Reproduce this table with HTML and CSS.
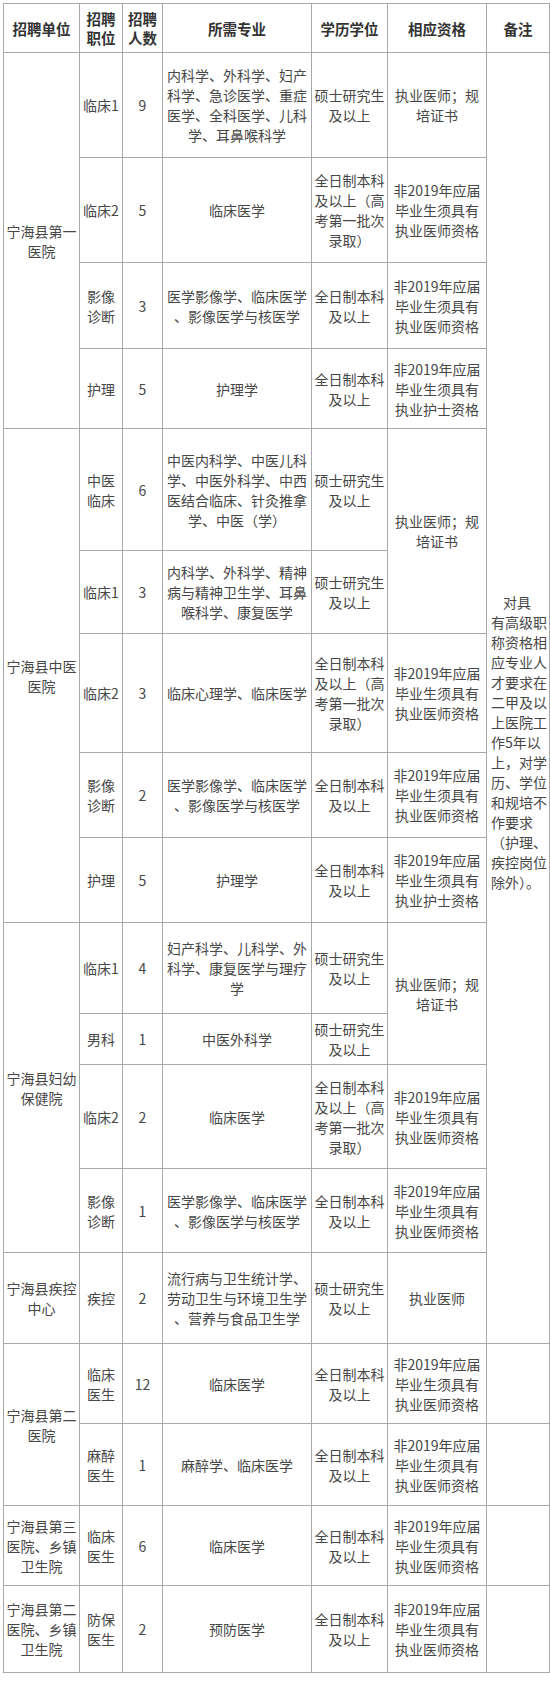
FILE: index.html
```html
<!DOCTYPE html>
<html lang="zh-CN">
<head>
<meta charset="utf-8">
<title>招聘计划表</title>
<link rel="stylesheet" href="styles.css">
</head>
<body>
<table class="plan">
  <colgroup>
    <col class="c-unit"><col class="c-post"><col class="c-num"><col class="c-major"><col class="c-edu"><col class="c-qual"><col class="c-note">
  </colgroup>
  <thead>
    <tr class="h49">
      <th>招聘单位</th><th>招聘<br>职位</th><th>招聘<br>人数</th><th>所需专业</th><th>学历学位</th><th>相应资格</th><th>备注</th>
    </tr>
  </thead>
  <tbody>
    <tr class="h105">
      <td rowspan="4">宁海县第一<br>医院</td>
      <td>临床1</td><td>9</td>
      <td>内科学、外科学、妇产<br>科学、急诊医学、重症<br>医学、全科医学、儿科<br>学、耳鼻喉科学</td>
      <td>硕士研究生<br>及以上</td>
      <td>执业医师；规<br>培证书</td>
      <td rowspan="14" class="note">对具<br>有高级职<br>称资格相<br>应专业人<br>才要求在<br>二甲及以<br>上医院工<br>作5年以<br>上，对学<br>历、学位<br>和规培不<br>作要求<br>（护理、<br>疾控岗位<br>除外）。</td>
    </tr>
    <tr class="h105">
      <td>临床2</td><td>5</td><td>临床医学</td>
      <td>全日制本科<br>及以上（高<br>考第一批次<br>录取）</td>
      <td>非2019年应届<br>毕业生须具有<br>执业医师资格</td>
    </tr>
    <tr class="h86">
      <td>影像<br>诊断</td><td>3</td>
      <td>医学影像学、临床医学<br>、影像医学与核医学</td>
      <td>全日制本科<br>及以上</td>
      <td>非2019年应届<br>毕业生须具有<br>执业医师资格</td>
    </tr>
    <tr class="h80">
      <td>护理</td><td>5</td><td>护理学</td>
      <td>全日制本科<br>及以上</td>
      <td>非2019年应届<br>毕业生须具有<br>执业护士资格</td>
    </tr>

    <tr class="h122">
      <td rowspan="5">宁海县中医<br>医院</td>
      <td>中医<br>临床</td><td>6</td>
      <td>中医内科学、中医儿科<br>学、中医外科学、中西<br>医结合临床、针灸推拿<br>学、中医（学）</td>
      <td>硕士研究生<br>及以上</td>
      <td rowspan="2">执业医师；规<br>培证书</td>
    </tr>
    <tr class="h83">
      <td>临床1</td><td>3</td>
      <td>内科学、外科学、精神<br>病与精神卫生学、耳鼻<br>喉科学、康复医学</td>
      <td>硕士研究生<br>及以上</td>
    </tr>
    <tr class="h119">
      <td>临床2</td><td>3</td><td>临床心理学、临床医学</td>
      <td>全日制本科<br>及以上（高<br>考第一批次<br>录取）</td>
      <td>非2019年应届<br>毕业生须具有<br>执业医师资格</td>
    </tr>
    <tr class="h85">
      <td>影像<br>诊断</td><td>2</td>
      <td>医学影像学、临床医学<br>、影像医学与核医学</td>
      <td>全日制本科<br>及以上</td>
      <td>非2019年应届<br>毕业生须具有<br>执业医师资格</td>
    </tr>
    <tr class="h85">
      <td>护理</td><td>5</td><td>护理学</td>
      <td>全日制本科<br>及以上</td>
      <td>非2019年应届<br>毕业生须具有<br>执业护士资格</td>
    </tr>

    <tr class="h91">
      <td rowspan="4">宁海县妇幼<br>保健院</td>
      <td>临床1</td><td>4</td>
      <td>妇产科学、儿科学、外<br>科学、康复医学与理疗<br>学</td>
      <td>硕士研究生<br>及以上</td>
      <td rowspan="2">执业医师；规<br>培证书</td>
    </tr>
    <tr class="h51">
      <td>男科</td><td>1</td><td>中医外科学</td>
      <td>硕士研究生<br>及以上</td>
    </tr>
    <tr class="h104">
      <td>临床2</td><td>2</td><td>临床医学</td>
      <td>全日制本科<br>及以上（高<br>考第一批次<br>录取）</td>
      <td>非2019年应届<br>毕业生须具有<br>执业医师资格</td>
    </tr>
    <tr class="h84">
      <td>影像<br>诊断</td><td>1</td>
      <td>医学影像学、临床医学<br>、影像医学与核医学</td>
      <td>全日制本科<br>及以上</td>
      <td>非2019年应届<br>毕业生须具有<br>执业医师资格</td>
    </tr>

    <tr class="h91">
      <td>宁海县疾控<br>中心</td>
      <td>疾控</td><td>2</td>
      <td>流行病与卫生统计学、<br>劳动卫生与环境卫生学<br>、营养与食品卫生学</td>
      <td>硕士研究生<br>及以上</td>
      <td>执业医师</td>
    </tr>

    <tr class="h80">
      <td rowspan="2">宁海县第二<br>医院</td>
      <td>临床<br>医生</td><td>12</td><td>临床医学</td>
      <td>全日制本科<br>及以上</td>
      <td>非2019年应届<br>毕业生须具有<br>执业医师资格</td>
      <td></td>
    </tr>
    <tr class="h82">
      <td>麻醉<br>医生</td><td>1</td><td>麻醉学、临床医学</td>
      <td>全日制本科<br>及以上</td>
      <td>非2019年应届<br>毕业生须具有<br>执业医师资格</td>
      <td></td>
    </tr>
    <tr class="h80">
      <td>宁海县第三<br>医院、乡镇<br>卫生院</td>
      <td>临床<br>医生</td><td>6</td><td>临床医学</td>
      <td>全日制本科<br>及以上</td>
      <td>非2019年应届<br>毕业生须具有<br>执业医师资格</td>
      <td></td>
    </tr>
    <tr class="h87">
      <td>宁海县第二<br>医院、乡镇<br>卫生院</td>
      <td>防保<br>医生</td><td>2</td><td>预防医学</td>
      <td>全日制本科<br>及以上</td>
      <td>非2019年应届<br>毕业生须具有<br>执业医师资格</td>
      <td></td>
    </tr>
  </tbody>
</table>
</body>
</html>
```

FILE: styles.css
```css
html, body {
  margin: 0;
  padding: 0;
  background: #fff;
}

body {
  font-family: "Noto Sans CJK SC", "Microsoft YaHei", "DejaVu Sans", sans-serif;
  color: #474747;
}

.plan {
  margin: 3px 0 0 3px;
  width: 546px;
  table-layout: fixed;
  border-collapse: collapse;
}

.c-unit { width: 76px; }
.c-post { width: 43px; }
.c-num { width: 40px; }
.c-major { width: 149px; }
.c-edu { width: 76px; }
.c-qual { width: 99px; }
.c-note { width: 63px; }

.plan th,
.plan td {
  border: 1px solid #a8a8a8;
  padding: 0 1px;
  text-align: center;
  vertical-align: middle;
  white-space: nowrap;
  overflow: visible;
}

.plan th {
  font-size: 14.5px;
  line-height: 19px;
  font-weight: 700;
  color: #333;
}

.plan td {
  font-size: 14px;
  line-height: 20px;
  font-weight: 400;
}

.plan td.note {
  text-align: left;
  padding: 88px 0 0 4px;
  text-indent: 12px;
}

.h49 { height: 49px; }
.h51 { height: 51px; }
.h80 { height: 80px; }
.h82 { height: 82px; }
.h83 { height: 83px; }
.h84 { height: 84px; }
.h85 { height: 85px; }
.h86 { height: 86px; }
.h87 { height: 87px; }
.h91 { height: 91px; }
.h104 { height: 104px; }
.h105 { height: 105px; }
.h119 { height: 119px; }
.h122 { height: 122px; }
```
